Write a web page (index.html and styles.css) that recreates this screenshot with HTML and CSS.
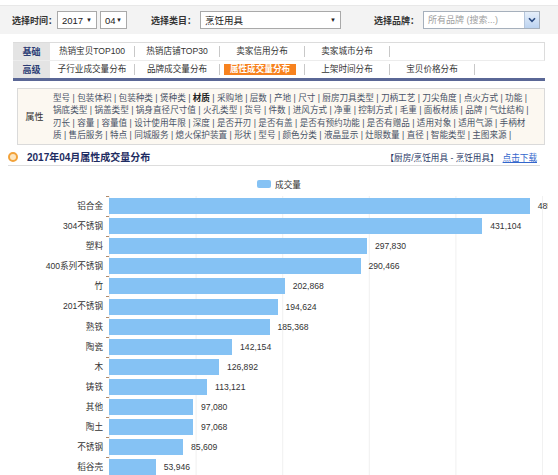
FILE: index.html
```html
<!DOCTYPE html>
<html lang="zh-CN">
<head>
    <meta charset="UTF-8">
    <title>属性成交量分布</title>
    <link rel="stylesheet" href="styles.css">
</head>
<body>
    <div class="filter-bar">
        <span class="filter-label">选择时间：</span>
        <div class="select select-year"><span>2017</span><i class="caret">▼</i></div>
        <div class="select select-month"><span>04</span><i class="caret">▼</i></div>
        <span class="filter-label label-cat">选择类目：</span>
        <div class="select select-cat"><span>烹饪用具</span><i class="caret">▼</i></div>
        <span class="filter-label label-brand">选择品牌：</span>
        <div class="combo">
            <span class="combo-text">所有品牌 (搜索...)</span>
            <span class="combo-btn">
                <svg width="8" height="6" viewBox="0 0 8 6"><path d="M1 1.2 L4 4.4 L7 1.2" fill="none" stroke="#2a4a80" stroke-width="1.6"/></svg>
            </span>
        </div>
    </div>

    <div class="tabs">
        <div class="tab-row first">
            <div class="tab-head">基础</div>
            <div class="tab">热销宝贝TOP100</div>
            <div class="tab">热销店铺TOP30</div>
            <div class="tab">卖家信用分布</div>
            <div class="tab">卖家城市分布</div>
        </div>
        <div class="tab-row">
            <div class="tab-head">高级</div>
            <div class="tab">子行业成交量分布</div>
            <div class="tab">品牌成交量分布</div>
            <div class="tab active"><span>属性成交量分布</span></div>
            <div class="tab">上架时间分布</div>
            <div class="tab">宝贝价格分布</div>
        </div>
    </div>

    <div class="attr-box">
        <div class="attr-head">属性</div>
        <div class="attr-list">
            型号 | 包装体积 | 包装种类 | 煲种类 | <b>材质</b> | 采购地 | 层数 | 产地 | 尺寸 | 厨房刀具类型 | 刀柄工艺 | 刀尖角度 | 点火方式 | 功能 |<br>
            锅底类型 | 锅盖类型 | 锅身直径尺寸值 | 火孔类型 | 货号 | 件数 | 进风方式 | 净重 | 控制方式 | 毛重 | 面板材质 | 品牌 | 气灶结构 |<br>
            刃长 | 容量 | 容量值 | 设计使用年限 | 深度 | 是否开刃 | 是否有盖 | 是否有预约功能 | 是否有赠品 | 适用对象 | 适用气源 | 手柄材<br>
            质 | 售后服务 | 特点 | 同城服务 | 熄火保护装置 | 形状 | 型号 | 颜色分类 | 液晶显示 | 灶眼数量 | 直径 | 智能类型 | 主图来源 |
        </div>
    </div>

    <div class="title-row">
        <span class="title-icon"></span>
        <span class="title">2017年04月属性成交量分布</span>
        <span class="crumb">【厨房/烹饪用具 - 烹饪用具】</span>
        <a class="download" href="#">点击下载</a>
    </div>

    <div class="chart">
        <div class="legend"><span class="legend-swatch"></span>成交量</div>
        <div class="bars" id="bars"></div>
    </div>

    <script>
        const data = [
            ['铝合金', 485872],
            ['304不锈钢', 431104],
            ['塑料', 297830],
            ['400系列不锈钢', 290466],
            ['竹', 202868],
            ['201不锈钢', 194624],
            ['熟铁', 185368],
            ['陶瓷', 142154],
            ['木', 126892],
            ['铸铁', 113121],
            ['其他', 97080],
            ['陶土', 97068],
            ['不锈钢', 85609],
            ['稻谷壳', 53946]
        ];

        // 100,000 units = 86.6px on the axis
        const scale = 86.6 / 100000;
        const bars = document.getElementById('bars');

        data.forEach(function (item) {
            const row = document.createElement('div');
            row.className = 'bar-row';
            row.innerHTML =
                '<div class="bar-label">' + item[0] + '</div>' +
                '<div class="bar-plot">' +
                    '<div class="bar" style="width:' + (item[1] * scale).toFixed(1) + 'px"></div>' +
                    '<span class="bar-value">' + item[1].toLocaleString('en-US') + '</span>' +
                '</div>';
            bars.appendChild(row);
        });
    </script>
</body>
</html>
```

FILE: styles.css
```css
body {
    margin: 0;
    font-family: "Liberation Sans", "Noto Sans CJK SC", sans-serif;
    font-size: 9px;
    color: #333;
    background-color: #fff;
    width: 558px;
    overflow: hidden;
}

/* filter bar */
.filter-bar {
    margin-top: 5px;
    height: 28px;
    background-color: #f3f3f3;
    border-top: 1px solid #e8e8e8;
    display: flex;
    align-items: center;
    padding-left: 12px;
}
.filter-label {
    font-weight: bold;
    color: #333;
    width: 45px;
    white-space: nowrap;
}
.label-cat {
    margin-left: 24px;
    width: 49px;
}
.label-brand {
    margin-left: 33px;
    width: 49px;
}
.select {
    box-sizing: border-box;
    height: 18px;
    border: 1px solid #a9a9a9;
    background-color: #fff;
    display: flex;
    align-items: center;
    justify-content: space-between;
    padding: 0 4px;
    font-size: 9.5px;
    color: #222;
}
.select .caret {
    font-style: normal;
    font-size: 6px;
    color: #222;
}
.select-year {
    width: 40px;
    margin-right: 3px;
}
.select-month {
    width: 27px;
}
.select-cat {
    width: 141px;
}
.combo {
    box-sizing: border-box;
    width: 117px;
    height: 18px;
    border: 1px solid #a6b0bc;
    background-color: #fff;
    display: flex;
    align-items: stretch;
}
.combo-text {
    flex: 1;
    color: #a0a0a0;
    padding-left: 4px;
    line-height: 16px;
    font-size: 9px;
}
.combo-btn {
    width: 14px;
    border-left: 1px solid #b5c6dc;
    background: linear-gradient(#e6effa, #bcd3f0);
    display: flex;
    align-items: center;
    justify-content: center;
}

/* tabs */
.tabs {
    margin: 8px 0 0 13px;
    width: 532px;
    border-bottom: 3px solid #5a6796;
}
.tab-row {
    display: flex;
    align-items: center;
    height: 17px;
}
.tab-row.first {
    border-top: 1px solid #dcdcdc;
    border-right: 1px solid #dcdcdc;
    border-bottom: 1px solid #ececec;
}
.tab-head {
    width: 37px;
    align-self: stretch;
    background-color: #e4e4e4;
    color: #2c3d75;
    font-weight: bold;
    display: flex;
    align-items: center;
    justify-content: center;
}
.tab {
    box-sizing: border-box;
    width: 85px;
    height: 11px;
    line-height: 11px;
    text-align: center;
    border-right: 1px solid #c8c8c8;
    font-size: 8.6px;
    color: #333;
}
.tab.active span {
    display: block;
    margin: 0 8px 0 4px;
    background-color: #f7821f;
    color: #fff;
    font-weight: bold;
}

/* attribute list */
.attr-box {
    box-sizing: border-box;
    margin: 7px 0 0 17px;
    width: 528px;
    height: 57px;
    border: 1px solid #dadada;
    background-color: #fcf8f1;
    display: flex;
}
.attr-head {
    width: 33px;
    display: flex;
    align-items: center;
    justify-content: center;
    font-size: 9px;
    color: #333;
}
.attr-list {
    padding: 3px 0 0 2px;
    font-size: 8.6px;
    line-height: 12.3px;
    color: #4a5468;
    white-space: nowrap;
}
.attr-list b {
    color: #222;
}

/* section title */
.title-row {
    margin: 3px 0 0 8px;
    width: 532px;
    height: 17px;
    border-bottom: 1px solid #dddddd;
    display: flex;
    align-items: center;
}
.title-icon {
    box-sizing: border-box;
    width: 10px;
    height: 10px;
    border-radius: 50%;
    border: 2px solid #f2a23a;
    background-color: #fde6bf;
    margin-right: 9px;
}
.title {
    font-size: 10px;
    font-weight: bold;
    color: #1d2b61;
}
.crumb {
    margin-left: auto;
    font-size: 8.6px;
    color: #2c3a66;
}
.download {
    margin: 0 3px 0 4px;
    font-size: 8.6px;
    color: #3366cc;
}

/* chart */
.chart {
    width: 548px;
    overflow: hidden;
    margin-top: 13px;
}
.legend {
    display: flex;
    justify-content: center;
    align-items: center;
    padding-left: 10px;
    height: 10px;
    margin-bottom: 7px;
    font-size: 8.6px;
    color: #333;
}
.legend-swatch {
    width: 14px;
    height: 8px;
    border-radius: 2px;
    background-color: #85c2f4;
    margin-right: 4px;
}
.bar-row {
    display: flex;
    height: 20.1px;
}
.bar-label {
    box-sizing: border-box;
    width: 109px;
    flex: none;
    padding-right: 6px;
    text-align: right;
    line-height: 20.1px;
    font-size: 8.6px;
    color: #333;
    background: linear-gradient(#b08a6a, #b08a6a) no-repeat right top / 3px 1px;
}
.bar-plot {
    flex: 1;
    display: flex;
    align-items: center;
    background-image: linear-gradient(to right, #f0f0f0 1px, transparent 1px);
    background-size: 86.6px 100%;
}
.bar {
    height: 16px;
    background-color: #85c2f4;
    flex: none;
}
.bar-value {
    margin-left: 8px;
    font-size: 8.6px;
    color: #333;
    white-space: nowrap;
}
```
